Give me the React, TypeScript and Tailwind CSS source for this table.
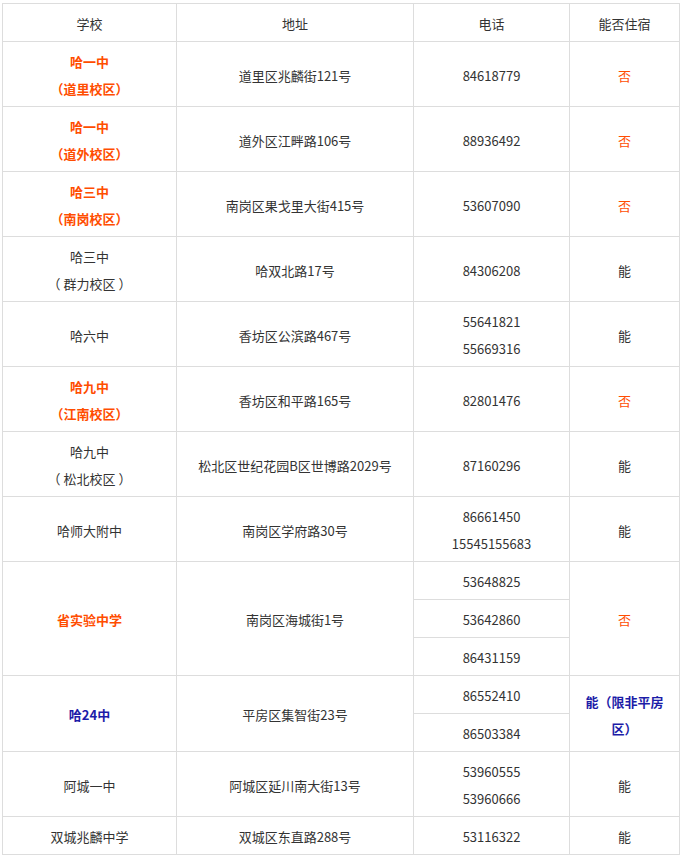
import React from "react"

type Tone = "red" | "redThin" | "blue"

type Row = {
  school: string[]
  schoolTone?: Tone
  addr: string
  phones: string[]
  split?: boolean
  stay: string[]
  stayTone?: Tone
}

const rows: Row[] = [
  { school: ["哈一中", "（道里校区）"], schoolTone: "red", addr: "道里区兆麟街121号", phones: ["84618779"], stay: ["否"], stayTone: "redThin" },
  { school: ["哈一中", "（道外校区）"], schoolTone: "red", addr: "道外区江畔路106号", phones: ["88936492"], stay: ["否"], stayTone: "redThin" },
  { school: ["哈三中", "（南岗校区）"], schoolTone: "red", addr: "南岗区果戈里大街415号", phones: ["53607090"], stay: ["否"], stayTone: "redThin" },
  { school: ["哈三中", "（ 群力校区 ）"], addr: "哈双北路17号", phones: ["84306208"], stay: ["能"] },
  { school: ["哈六中"], addr: "香坊区公滨路467号", phones: ["55641821", "55669316"], stay: ["能"] },
  { school: ["哈九中", "（江南校区）"], schoolTone: "red", addr: "香坊区和平路165号", phones: ["82801476"], stay: ["否"], stayTone: "redThin" },
  { school: ["哈九中", "（ 松北校区 ）"], addr: "松北区世纪花园B区世博路2029号", phones: ["87160296"], stay: ["能"] },
  { school: ["哈师大附中"], addr: "南岗区学府路30号", phones: ["86661450", "15545155683"], stay: ["能"] },
  { school: ["省实验中学"], schoolTone: "red", addr: "南岗区海城街1号", phones: ["53648825", "53642860", "86431159"], split: true, stay: ["否"], stayTone: "redThin" },
  { school: ["哈24中"], schoolTone: "blue", addr: "平房区集智街23号", phones: ["86552410", "86503384"], split: true, stay: ["能（限非平房", "区）"], stayTone: "blue" },
  { school: ["阿城一中"], addr: "阿城区延川南大街13号", phones: ["53960555", "53960666"], stay: ["能"] },
  { school: ["双城兆麟中学"], addr: "双城区东直路288号", phones: ["53116322"], stay: ["能"] },
]

const cell = "border border-[#dddddd] px-[8px] pt-[6px] pb-[4px] text-center align-middle"

function tone(t?: Tone) {
  if (t === "red") return "font-bold text-[#ff4d00]"
  if (t === "redThin") return "text-[#ff4d00]"
  if (t === "blue") return "font-bold text-[#1c1ca8]"
  return "text-[#333333]"
}

function Lines({ items }: { items: string[] }) {
  return (
    <>
      {items.map((s, i) => (
        <div key={i}>{s}</div>
      ))}
    </>
  )
}

export default function App() {
  return (
    <div className="min-h-[858px] bg-white pl-[2px] pt-[3px]">
      <table
        className="w-[677px] table-fixed border-collapse text-[13px] leading-[27px] text-[#333333]"
        style={{ fontFamily: '"Noto Sans CJK SC", "Noto Sans", sans-serif' }}
      >
        <colgroup>
          <col className="w-[174px]" />
          <col className="w-[237px]" />
          <col className="w-[156px]" />
          <col className="w-[110px]" />
        </colgroup>
        <thead>
          <tr>
            <th className={`${cell} font-normal`}>学校</th>
            <th className={`${cell} font-normal`}>地址</th>
            <th className={`${cell} font-normal`}>电话</th>
            <th className={`${cell} font-normal`}>能否住宿</th>
          </tr>
        </thead>
        <tbody>
          {rows.map((r, ri) => {
            if (r.split) {
              const n = r.phones.length
              return r.phones.map((p, pi) => (
                <tr key={`${ri}-${pi}`}>
                  {pi === 0 && (
                    <>
                      <td rowSpan={n} className={`${cell} ${tone(r.schoolTone)}`}>
                        <Lines items={r.school} />
                      </td>
                      <td rowSpan={n} className={cell}>
                        {r.addr}
                      </td>
                    </>
                  )}
                  <td className={cell}>{p}</td>
                  {pi === 0 && (
                    <td rowSpan={n} className={`${cell} ${tone(r.stayTone)}`}>
                      <Lines items={r.stay} />
                    </td>
                  )}
                </tr>
              ))
            }
            return (
              <tr key={ri}>
                <td className={`${cell} ${tone(r.schoolTone)}`}>
                  <Lines items={r.school} />
                </td>
                <td className={cell}>{r.addr}</td>
                <td className={cell}>
                  <Lines items={r.phones} />
                </td>
                <td className={`${cell} ${tone(r.stayTone)}`}>
                  <Lines items={r.stay} />
                </td>
              </tr>
            )
          })}
        </tbody>
      </table>
    </div>
  )
}
